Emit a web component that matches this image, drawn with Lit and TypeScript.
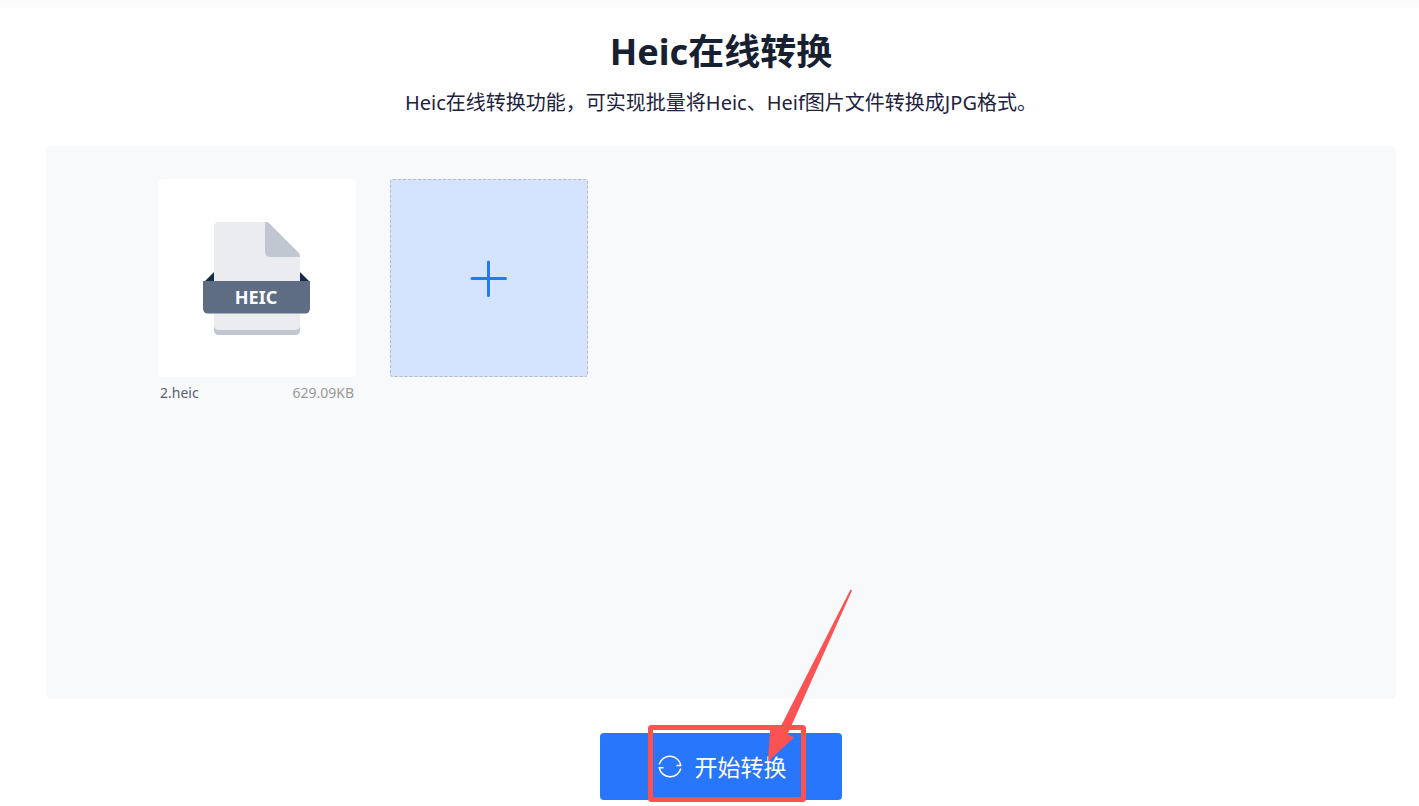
import { LitElement, html, css } from "lit";
import { customElement, state } from "lit/decorators.js";

interface HeicFile {
  name: string;
  size: string;
}

@customElement("heic-icon")
class HeicIcon extends LitElement {
  static styles = css`
    :host { display: block; }
    .icon { display: block; }
    .label {
      font: 700 18px "Noto Sans", "Open Sans", sans-serif;
      fill: #ffffff;
      text-anchor: middle;
    }
  `;

  render() {
    return html`
      <svg class="icon" width="108" height="116" viewBox="0 -2 108 116" aria-hidden="true">
        <path d="M1 60 L12 49 V60Z M107 60 L96 49 V60Z" fill="#172b4d" />
        <path d="M11 100 H97 V108 Q97 113 92 113 H16 Q11 113 11 108Z" fill="#c1c7d0" />
        <path d="M16 0 H63 L97 34 V103 Q97 108 92 108 H16 Q11 108 11 103 V5 Q11 0 16 0Z" fill="#ebecf0" />
        <path d="M62 0 H63 Q65 0 66 1 L96 31 Q97 32 97 35 H67 Q62 35 62 30Z" fill="#c1c7d0" />
        <path d="M0 59 H107 V86 Q107 91.500 102 91.500 H5 Q0 91.500 0 86Z" fill="#5e6c84" />
        <text class="label" x="53" y="82">HEIC</text>
      </svg>
    `;
  }
}

@customElement("app-root")
class AppRoot extends LitElement {
  static styles = css`
    :host {
      display: block;
      font-family: "Noto Sans", "Noto Sans CJK SC", sans-serif;
      color: #172030;
    }
    * { box-sizing: border-box; }
    .page {
      display: flex;
      flex-direction: column;
      align-items: center;
      min-height: 100vh;
      padding: 28px 23px 6px 46px;
      background: linear-gradient(#fbfbfb, #ffffff 12px);
    }
    .title {
      margin: 0;
      font-size: 36px;
      line-height: 48px;
      font-weight: 700;
      text-align: center;
    }
    .intro {
      margin: 12px 0 28px;
      font-size: 20px;
      line-height: 30px;
      color: #22223f;
      text-align: center;
    }
    .panel {
      flex: 1;
      width: 100%;
      padding: 33px 112px;
      border-radius: 5px;
      background: #f7f9fb;
    }
    .files {
      display: flex;
      flex-wrap: wrap;
      gap: 34px;
      margin: 0;
      padding: 0;
      list-style: none;
    }
    .file { width: 198px; }
    .thumb {
      display: flex;
      align-items: center;
      justify-content: center;
      height: 198px;
      border-radius: 4px;
      background: #ffffff;
    }
    .caption {
      display: flex;
      justify-content: space-between;
      padding: 5px 2px;
      font-size: 14px;
      line-height: 22px;
      color: #5a5e74;
    }
    .size { color: #999999; }
    .add {
      display: flex;
      align-items: center;
      justify-content: center;
      width: 198px;
      height: 198px;
      padding: 0;
      border: 1px dashed #b8bbc2;
      border-radius: 3px;
      background: #d4e3fe;
      cursor: pointer;
    }
    .action {
      position: relative;
      margin-top: 34px;
    }
    .start {
      display: flex;
      align-items: center;
      justify-content: center;
      gap: 13px;
      width: 242px;
      height: 67px;
      padding: 0 0 0 2px;
      border: 0;
      border-radius: 4px;
      background: #2876fb;
      color: #ffffff;
      font-family: inherit;
      font-size: 23px;
      line-height: 32px;
      cursor: pointer;
    }
    .pointer {
      position: absolute;
      left: 47px;
      bottom: -4px;
      pointer-events: none;
    }
  `;

  @state() private files: HeicFile[] = [{ name: "2.heic", size: "629.09KB" }];

  render() {
    return html`
      <main class="page">
        <h1 class="title">Heic在线转换</h1>
        <p class="intro">Heic在线转换功能，可实现批量将Heic、Heif图片文件转换成JPG格式。</p>
        <section class="panel">
          <ul class="files">
            ${this.files.map(
              (file) => html`
                <li class="file">
                  <div class="thumb"><heic-icon></heic-icon></div>
                  <div class="caption">
                    <span>${file.name}</span><span class="size">${file.size}</span>
                  </div>
                </li>
              `
            )}
            <li>
              <button class="add" type="button" aria-label="+">
                <svg width="38" height="38" viewBox="0 0 38 38" fill="none" stroke="#2876fb" stroke-width="3" stroke-linecap="round">
                  <path d="M18.5 3V36.5M2 19.5H35.5" />
                </svg>
              </button>
            </li>
          </ul>
        </section>
        <div class="action">
          <button class="start" type="button">
            <svg width="24" height="24" viewBox="0 0 24 24" fill="none" stroke="#ffffff" stroke-width="1.5">
              <path d="M1.2 9.5A11 11 0 0 1 22.700 10.500H18.5" />
              <path d="M22.800 13.500A11 11 0 0 1 1.300 12.800H5.5" />
            </svg>
            <span>开始转换</span>
          </button>
          <svg class="pointer" width="207" height="215" viewBox="0 0 207 215" aria-hidden="true">
            <rect x="3.5" y="138.5" width="153" height="72" rx="1" fill="none" stroke="#fb5353" stroke-width="5" stroke-linejoin="round" />
            <path d="M203.5 0.5L205 1.5L140.700 145L147 148.500L121 172.500L123 141L132 140.500L134 137Z" fill="#fb5353" />
          </svg>
        </div>
      </main>
    `;
  }
}
